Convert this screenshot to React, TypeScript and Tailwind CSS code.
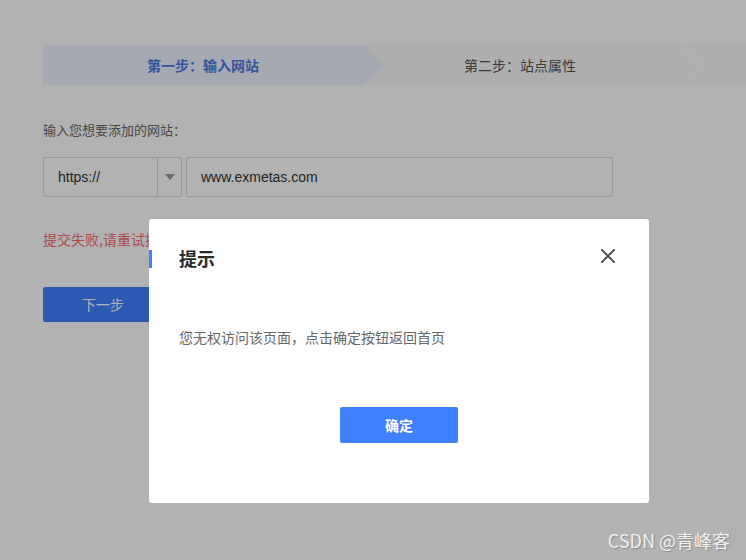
import React from "react";

const cjk = { fontFamily: '"Microsoft YaHei", "Noto Sans CJK SC", "Liberation Sans", sans-serif' };

export default function App() {
  return (
    <div className="relative h-[560px] w-full overflow-hidden bg-white" style={cjk}>
      {/* underlying page */}
      <div className="pl-[43px] pt-[45px]">
        {/* steps */}
        <div className="flex h-10 w-[703px] bg-[#f9f9f9]">
          <div className="flex h-10 w-[340px] shrink-0 items-center justify-center bg-[#ebf2ff] pr-[20px] text-[14px] font-bold text-[#4a7ae0] [clip-path:polygon(0_0,320px_0,340px_50%,320px_100%,0_100%)]">
            第一步：输入网站
          </div>
          <div className="relative ml-[-20px] flex h-10 w-[340px] shrink-0 items-center justify-center pr-[26px] text-[14px] text-[#555]">
            第二步：站点属性
            <svg className="absolute right-0 top-0 h-10 w-[22px]" viewBox="0 0 22 40">
              <polyline points="1,0 21,20 1,40" fill="none" stroke="#ffffff" strokeWidth="1.5" />
            </svg>
          </div>
        </div>

        <div className="mt-[36px] text-[13px] leading-[18px] text-[#666]">输入您想要添加的网站：</div>

        <div className="mt-[18px] flex h-10 gap-1">
          <div className="flex w-[139px] rounded-[2px] border border-[#dcdcdc]">
            <div className="flex flex-1 items-center pl-[14px] text-[14px] text-[#333]" style={{ fontFamily: '"Liberation Sans", Arial, sans-serif' }}>
              https://
            </div>
            <div className="flex w-[24px] items-center justify-center border-l border-[#dcdcdc]">
              <svg width="10" height="6" viewBox="0 0 10 6">
                <polygon points="0,0 10,0 5,6" fill="#999" />
              </svg>
            </div>
          </div>
          <div className="flex w-[427px] items-center rounded-[2px] border border-[#dcdcdc] pl-[14px] text-[14px] text-[#333]" style={{ fontFamily: '"Liberation Sans", Arial, sans-serif' }}>
            www.exmetas.com
          </div>
        </div>

        <div className="mt-[32px] text-[14px] leading-[20px] text-[#f56c6c]">提交失败,请重试提交</div>

        <button className="mt-[38px] flex h-[35px] w-[120px] items-center justify-center rounded-[2px] bg-[#4080ff] text-[14px] text-white">
          下一步
        </button>
      </div>

      {/* overlay */}
      <div className="absolute inset-0 bg-black/30" />

      {/* modal */}
      <div className="absolute left-[149px] top-[219px] h-[284px] w-[500px] rounded-[3px] bg-white px-[30px] pt-[26px]">
        <div className="absolute left-0 top-[31px] h-[18px] w-[3px] bg-[#4080ff]" />
        <div className="flex items-center justify-between">
          <div className="text-[18px] font-bold leading-[26px] text-[#2a2a2a]">提示</div>
          <svg className="mr-[4px] mt-[-4px]" width="14" height="14" viewBox="0 0 14 14">
            <path d="M1 1L13 13M13 1L1 13" stroke="#555" strokeWidth="2" strokeLinecap="round" />
          </svg>
        </div>
        <div className="mt-[55px] text-[14px] leading-[22px] text-[#666]">您无权访问该页面，点击确定按钮返回首页</div>
        <div className="mt-[59px] flex justify-center">
          <button className="flex h-[36px] w-[118px] items-center justify-center rounded-[2px] bg-[#4080ff] text-[14px] font-semibold text-white">
            确定
          </button>
        </div>
      </div>

      {/* watermark */}
      <div className="absolute right-[16px] top-[528px] text-[18px] leading-[24px] text-[#f2f2f2] [text-shadow:1px_1px_1px_#8a8a8a]">
        CSDN @青峰客
      </div>
    </div>
  );
}
